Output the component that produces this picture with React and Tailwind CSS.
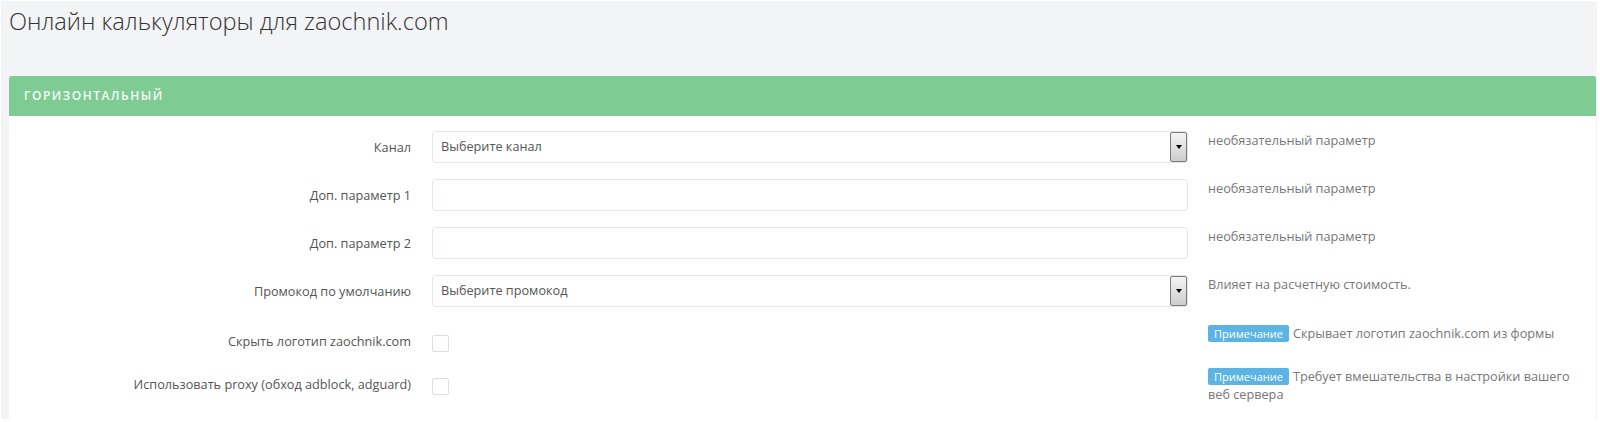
import React from "react";

const rows = [
  { label: "Канал", type: "select", placeholder: "Выберите канал", help: "необязательный параметр" },
  { label: "Доп. параметр 1", type: "input", help: "необязательный параметр" },
  { label: "Доп. параметр 2", type: "input", help: "необязательный параметр" },
  { label: "Промокод по умолчанию", type: "select", placeholder: "Выберите промокод", help: "Влияет на расчетную стоимость." },
];

const checks = [
  { label: "Скрыть логотип zaochnik.com", note: "Скрывает логотип zaochnik.com из формы" },
  { label: "Использовать proxy (обход adblock, adguard)", note: "Требует вмешательства в настройки вашего веб сервера" },
];

function SelectBox({ placeholder }) {
  return (
    <div className="relative h-[32px] w-[756px] border border-[#e5e6e7] rounded-[3px] bg-white flex items-center pl-[8px] text-[12.7px] text-[#555]">
      {placeholder}
      <div className="absolute right-0 top-0 bottom-0 w-[17px] border border-[#7a7a7a] rounded-[2px] bg-gradient-to-b from-[#f4f4f4] to-[#cdcdcd] flex items-center justify-center">
        <div className="w-0 h-0 border-l-[3px] border-r-[3px] border-t-[4px] border-l-transparent border-r-transparent border-t-black" />
      </div>
    </div>
  );
}

export default function App() {
  return (
    <div className="bg-white w-[1600px] h-[422px] overflow-hidden" style={{ fontFamily: '"Open Sans", sans-serif' }}>
      <div className="ml-[1px] mt-[1px] w-[1596px] h-[418px] bg-[#f3f4f6] pl-[8px] overflow-hidden">
        {/* заголовок */}
        <h1 className="pt-[8px] text-[23.6px] leading-[24px] font-light text-[#333] h-[75px]">
          Онлайн калькуляторы для zaochnik.com
        </h1>

        <div className="w-[1587px] bg-white">
          <div className="h-[40px] bg-[#7ecc93] rounded-t-[2px] flex items-center pl-[15px] text-[12px] font-semibold tracking-[1.5px] text-[#f4fbf6]">
            ГОРИЗОНТАЛЬНЫЙ
          </div>

          <div className="pt-[15px] pb-[40px]">
            {rows.map((r) => (
              <div key={r.label} className="flex h-[32px] mb-[16px]">
                <div className="w-[402px] text-right pt-[6px] leading-[20px] text-[12.7px] text-[#555]">{r.label}</div>
                <div className="ml-[21px]">
                  {r.type === "select" ? (
                    <SelectBox placeholder={r.placeholder} />
                  ) : (
                    <div className="h-[32px] w-[756px] border border-[#e5e6e7] rounded-[3px] bg-white" />
                  )}
                </div>
                <div className="ml-[20px] w-[373px] leading-[18px] text-[12.7px] text-[#777]">{r.help}</div>
              </div>
            ))}

            {checks.map((c) => (
              <div key={c.label} className="flex h-[27px] mb-[16px]">
                <div className="w-[402px] text-right pt-[8px] leading-[20px] text-[12.7px] text-[#555]">{c.label}</div>
                <div className="ml-[21px] w-[756px] pt-[12px]">
                  <div className="w-[17px] h-[17px] border border-[#dedede] rounded-[2px] bg-white" />
                </div>
                <div className="ml-[20px] w-[375px] pt-[1px] leading-[18px] text-[12.7px] text-[#777]">
                  <span className="inline-block bg-[#5bb4e3] text-white text-[11px] leading-[17px] px-[6px] rounded-[2px] mr-[4px]">
                    Примечание
                  </span>
                  {c.note}
                </div>
              </div>
            ))}
          </div>
        </div>
      </div>
    </div>
  );
}
